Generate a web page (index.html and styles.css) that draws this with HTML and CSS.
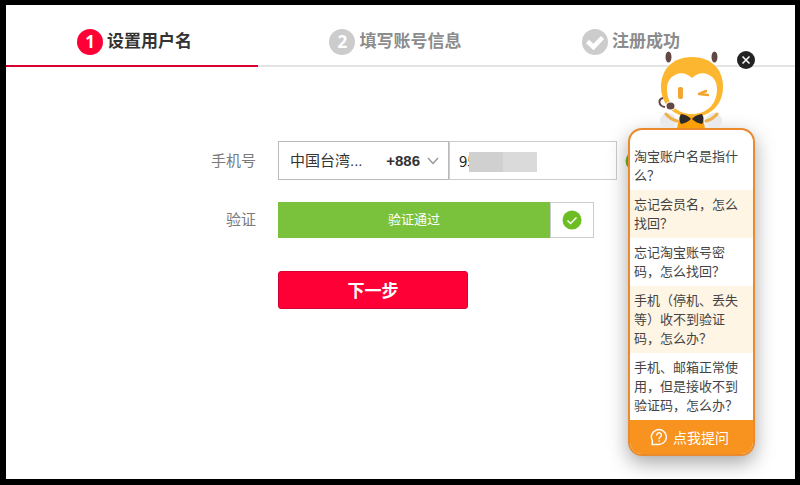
FILE: index.html
```html
<!DOCTYPE html>
<html lang="zh-CN">
<head>
    <meta charset="UTF-8">
    <meta name="viewport" content="width=device-width, initial-scale=1.0">
    <title>设置用户名</title>
    <link rel="stylesheet" href="styles.css">
</head>
<body>
    <main class="page">
        <ol class="steps">
            <li class="step active"><span class="num">1</span>设置用户名</li>
            <li class="step"><span class="num">2</span>填写账号信息</li>
            <li class="step">
                <svg class="num" viewBox="0 0 26 26"><path d="M5.500 12.500l6 5.500 9-9.500" fill="none" stroke="#fff" stroke-width="4.500"/></svg>注册成功
            </li>
        </ol>

        <form class="form">
            <label class="label" for="phone">手机号</label>
            <div class="row">
                <div class="area">
                    <select class="area-select" aria-label="国家/地区">
                        <option>中国台湾...</option>
                    </select>
                    <span class="code">+886</span>
                    <svg class="arrow" viewBox="0 0 12 8"><path d="M1 1l5 5.500 5-5.500" fill="none" stroke="#999" stroke-width="1.500"/></svg>
                </div>
                <div class="phone">
                    <input type="text" id="phone" class="phone-input" value="95">
                    <span class="mask"></span>
                </div>
                <svg class="ok" viewBox="0 0 20 20"><circle cx="10" cy="10" r="9.500" fill="#6cbd22"/><path d="M5.500 10.500l3 3 6-6" fill="none" stroke="#fff" stroke-width="1.500"/></svg>
            </div>

            <span class="label">验证</span>
            <div class="row verify">
                <div class="passed">验证通过</div>
                <div class="passed-icon">
                    <svg class="ok" viewBox="0 0 20 20"><circle cx="10" cy="10" r="9.500" fill="#6cbd22"/><path d="M5.500 10.500l3 3 6-6" fill="none" stroke="#fff" stroke-width="1.500"/></svg>
                </div>
            </div>

            <button type="button" class="next">下一步</button>
        </form>

        <aside class="helper">
            <!-- bee mascot -->
            <svg class="bee" viewBox="628 48 127 80">
                <circle cx="668" cy="121" r="8" fill="#e9eaec"/>
                <circle cx="714" cy="121" r="8" fill="#e9eaec"/>
                <path d="M666 114q4 5 11 7M717 114q-4 5-11 7" fill="none" stroke="#eeb04a" stroke-width="3" stroke-linecap="round"/>
                <path d="M681 113h20q3 8 4 16h-28q1-8 4-16z" fill="#fd9f06"/>
                <ellipse cx="668.500" cy="57" rx="3" ry="5.500" fill="#624842"/>
                <ellipse cx="714.500" cy="57" rx="3" ry="5.500" fill="#624842"/>
                <path d="M692 57c19 0 31 12 31 30 0 17-12 30-31 30s-31-13-31-30c0-18 12-30 31-30z" fill="#fdb62f"/>
                <path d="M692 78c5-5 12-6 17-3 6 3 8 8 8 14 0 15-10 25-25 25s-25-10-25-25c0-6 2-11 8-14 5-3 12-2 17 3z" fill="#fff"/>
                <rect x="678" y="87" width="5" height="12" rx="2" fill="#f3a52f"/>
                <path d="M706 91l-7 3 9 1" fill="none" stroke="#f3a52f" stroke-width="2.500" stroke-linecap="round" stroke-linejoin="round"/>
                <path d="M663 98c-5 1-5 8 2 9" fill="none" stroke="#624842" stroke-width="2"/>
                <ellipse cx="670.500" cy="106" rx="5" ry="4.500" fill="#fff"/>
                <ellipse cx="670.500" cy="106" rx="4" ry="3.500" fill="#624842"/>
                <path d="M681 114q7 1 10 5q-4 4-10 5q-3-5 0-10zM702 114q-7 1-10 5q4 4 10 5q3-5 0-10z" fill="#2d2a29"/>
            </svg>
            <button type="button" class="close" aria-label="关闭">
                <svg viewBox="0 0 18 18"><path d="M5.500 5.500l7 7M12.500 5.500l-7 7" stroke="#fff" stroke-width="1.500"/></svg>
            </button>
            <div class="panel">
                <ul class="questions">
                    <li><a href="#">淘宝账户名是指什么？</a></li>
                    <li><a href="#">忘记会员名，怎么找回？</a></li>
                    <li><a href="#">忘记淘宝账号密码，怎么找回？</a></li>
                    <li><a href="#">手机（停机、丢失等）收不到验证码，怎么办？</a></li>
                    <li><a href="#">手机、邮箱正常使用，但是接收不到验证码，怎么办？</a></li>
                </ul>
                <button type="button" class="ask">
                    <svg viewBox="0 0 18 18" fill="none" stroke="#fff" stroke-width="1.400" stroke-linecap="round" stroke-linejoin="round"><path d="M2 16.500l.5-3.500A7.500 7.500 0 1 1 9 16.500z"/><path d="M6.800 7a2.300 2.300 0 1 1 3.500 2c-.9.500-1.200.9-1.200 1.700M9.100 13v.2"/></svg>
                    点我提问
                </button>
            </div>
        </aside>
    </main>
</body>
</html>
```

FILE: styles.css
```css
* {
    box-sizing: border-box;
}

body {
    margin: 0;
    padding: 5px 5px 6px 6px;
    background-color: #000;
    color: #333;
    font-family: "Liberation Sans", "Noto Sans CJK SC", sans-serif;
    font-size: 15px;
}

button, input, select {
    font-family: inherit;
    color: inherit;
}

.page {
    position: relative;
    min-height: calc(100vh - 11px);
    background-color: #fff;
}

/* steps */
.steps {
    display: flex;
    margin: 0;
    padding: 0;
    list-style: none;
    box-shadow: inset 0 -2px #e4e4e4;
}

.step {
    display: flex;
    flex: 0 0 32%;
    align-items: center;
    gap: 4px;
    padding: 24px 0 10px 9%;
    border-bottom: 2px solid transparent;
    color: #8c8c8c;
    font-size: 17px;
    font-weight: bold;
    line-height: 26px;
    white-space: nowrap;
}

.step.active {
    border-color: #d80032;
    color: #333;
}

.num {
    width: 26px;
    height: 26px;
    border-radius: 50%;
    background-color: #ccc;
    color: #fff;
    font-family: "Open Sans", sans-serif;
    text-align: center;
}

.active .num {
    background-color: #ff0036;
}

/* form */
.form {
    display: grid;
    grid-template-columns: 250px 1fr;
    column-gap: 22px;
    row-gap: 22px;
    align-items: center;
    padding-top: 74px;
}

.label {
    color: #7a7a7a;
    line-height: 20px;
    text-align: right;
}

.row {
    display: flex;
    align-items: center;
}

.area {
    display: flex;
    align-items: center;
    width: 171px;
    height: 39px;
    padding: 0 9px 0 11px;
    border: 1px solid #bbb;
}

.area-select {
    flex: 1;
    min-width: 0;
    padding: 0;
    border: 0;
    background: none;
    appearance: none;
    font-size: 15px;
}

.code {
    font-size: 15px;
    font-weight: bold;
}

.arrow {
    width: 12px;
    height: 8px;
    margin-left: 7px;
}

.phone {
    position: relative;
}

.phone-input {
    display: block;
    width: 168px;
    height: 39px;
    padding: 0 9px;
    border: 1px solid #ccc;
    color: #222;
    font-family: "Noto Sans CJK SC", sans-serif;
    font-size: 15px;
}

/* hides the rest of the number */
.mask {
    position: absolute;
    top: 11px;
    left: 20px;
    width: 68px;
    height: 20px;
    background: linear-gradient(to right, #d0d0d0 50%, #dadada 50%);
}

.ok {
    width: 20px;
    height: 20px;
}

.phone + .ok {
    margin-left: 8px;
}

.verify {
    height: 36px;
}

.passed {
    width: 272px;
    background-color: #7ac23c;
    color: #fff;
    font-size: 13px;
    line-height: 36px;
    text-align: center;
}

.passed-icon {
    display: flex;
    align-items: center;
    justify-content: center;
    width: 44px;
    height: 36px;
    border: 1px solid #ccc;
}

.next {
    grid-column: 2;
    width: 190px;
    height: 38px;
    margin-top: 11px;
    padding: 0 0 2px;
    border: 1px solid #d80032;
    border-radius: 3px;
    background-color: #ff0036;
    color: #fff;
    font-size: 17px;
    font-weight: bold;
}

/* floating helper */
.helper {
    position: absolute;
    top: 43px;
    right: 40px;
    width: 127px;
}

.bee {
    display: block;
    width: 127px;
    height: 80px;
}

.close {
    position: absolute;
    top: 3px;
    right: 0;
    width: 18px;
    height: 18px;
    padding: 0;
    border: 0;
    border-radius: 50%;
    background-color: #222;
}

.close svg {
    display: block;
}

.panel {
    overflow: hidden;
    border: 2px solid #ea8a2c;
    border-radius: 14px;
    background-color: #fff;
    box-shadow: 0 7px 20px rgba(0, 0, 0, 0.35);
}

.questions {
    margin: 0;
    padding: 12px 0 0;
    list-style: none;
}

.questions li {
    padding: 5px 10px 5px 4px;
    font-size: 13px;
    line-height: 19px;
}

.questions li:nth-child(even) {
    background-color: #fff5e4;
}

.questions a {
    color: #444;
    text-decoration: none;
}

.ask {
    display: flex;
    align-items: center;
    justify-content: center;
    gap: 5px;
    width: 100%;
    height: 34px;
    padding: 0 4px 0 0;
    border: 0;
    background-color: #f8931f;
    color: #fff;
    font-size: 14px;
}

.ask svg {
    width: 18px;
    height: 18px;
}
```
